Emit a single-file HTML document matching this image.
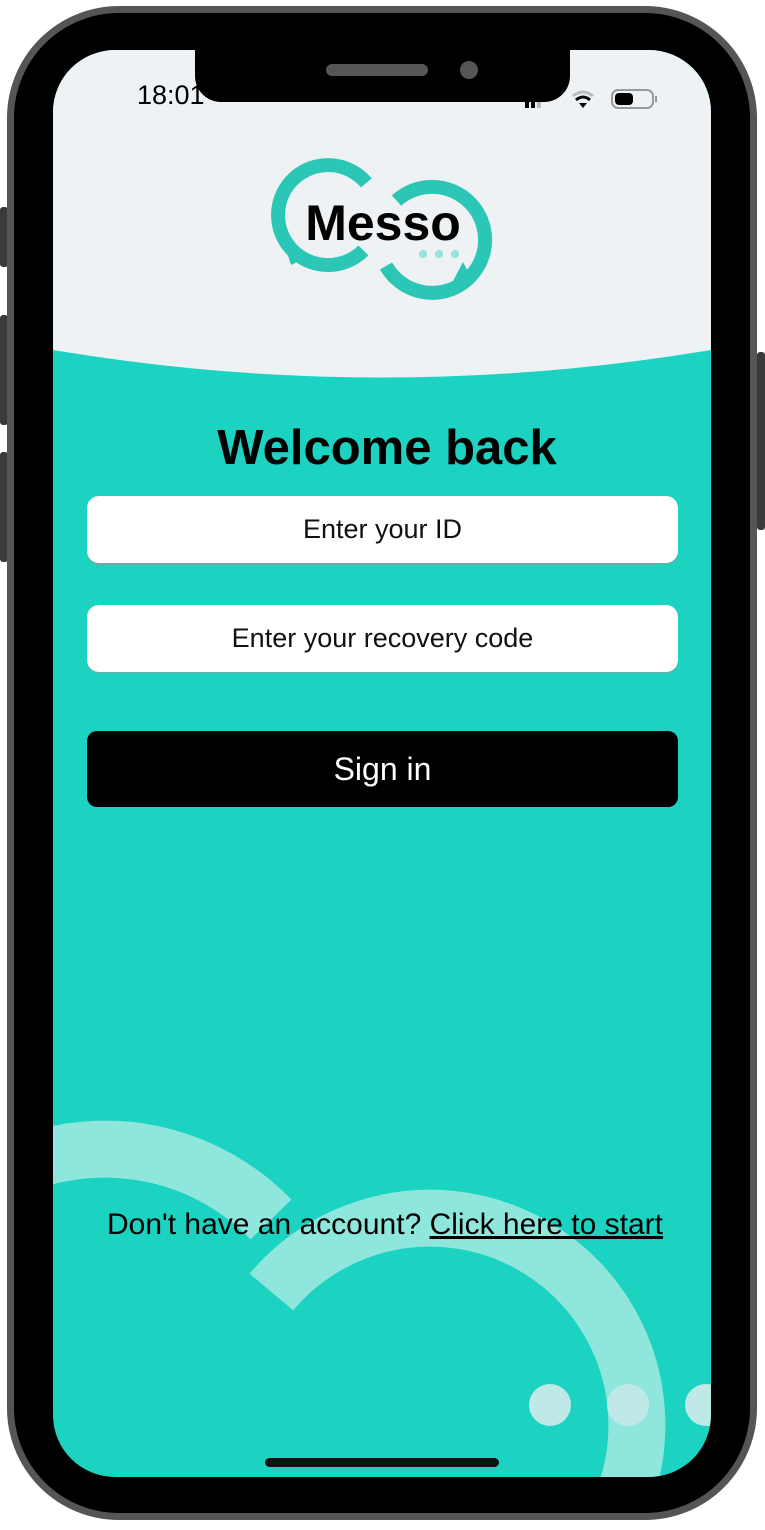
<!DOCTYPE html>
<html><head><meta charset="utf-8"><style>
html,body{margin:0;padding:0;background:#fff;}
body{width:765px;height:1530px;position:relative;overflow:hidden;font-family:"Liberation Sans",sans-serif;}
.abs{position:absolute;}
.btn{background:#3a3a3a;border-radius:3px;}
.frame{left:7px;top:6px;width:736px;height:1500px;border:7px solid #555;border-radius:112px;background:#000;}
.screen{left:53px;top:50px;width:658px;height:1427px;border-radius:62px;overflow:hidden;background:#1cd2c1;}
.inp{left:34px;width:591px;height:67px;background:#fff;border-radius:12px;box-shadow:0 2px 0 #4fb8b0;text-align:center;font-size:27px;line-height:67px;color:#111;}
</style></head><body>
<div class="abs btn" style="left:0;top:207px;width:8px;height:60px"></div>
<div class="abs btn" style="left:0;top:315px;width:8px;height:110px"></div>
<div class="abs btn" style="left:0;top:452px;width:8px;height:110px"></div>
<div class="abs btn" style="left:757px;top:352px;width:8px;height:178px"></div>
<div class="abs frame"></div>
<div class="abs screen">
  <svg class="abs" style="left:0;top:0" width="658" height="1427">
    <path d="M0 0 H658 V300 Q329 355 0 300 Z" fill="#eef2f5"/>
    <g fill="none" stroke="#8ee6dc" stroke-width="57">
      <path d="M-179 1330 A231 231 0 0 1 218 1169.5"/>
      <path d="M218.4 1242 A207 207 0 1 1 413 1579"/>
    </g>
    <circle cx="497" cy="1355" r="21" fill="#bfe9e6"/>
    <circle cx="575" cy="1355" r="21" fill="#bfe9e6"/>
    <circle cx="653" cy="1355" r="21" fill="#bfe9e6"/>
  </svg>
  <div class="abs" style="left:84px;top:30px;font-size:27px;color:#000">18:01</div>
  <svg class="abs" style="left:470px;top:38px" width="140" height="24">
    <rect x="2" y="12" width="4" height="8" fill="#000"/><rect x="8" y="9" width="4" height="11" fill="#000"/><rect x="14" y="6" width="4" height="14" fill="#bbb"/>
    <path d="M50 8 Q60 0 70 8" stroke="#bbb" stroke-width="3" fill="none"/>
    <path d="M53 12 Q60 6 67 12" stroke="#000" stroke-width="3" fill="none"/>
    <path d="M56 15 L60 20 L64 15 Z" fill="#000"/>
    <rect x="89" y="2" width="41" height="18" rx="6" fill="none" stroke="#999" stroke-width="2"/>
    <rect x="92" y="5" width="18" height="12" rx="4" fill="#000"/>
    <rect x="132" y="8" width="2" height="6" fill="#999"/>
  </svg>
  <div class="abs" style="left:0;width:668px;top:370px;text-align:center;font-size:49px;font-weight:bold;color:#000">Welcome back</div>
  <div class="abs inp" style="top:446px">Enter your ID</div>
  <div class="abs inp" style="top:555px">Enter your recovery code</div>
  <div class="abs" style="left:34px;top:681px;width:591px;height:76px;background:#000;border-radius:10px;color:#fff;text-align:center;font-size:32px;line-height:76px">Sign in</div>
  <div class="abs" style="left:0;width:664px;top:1158px;text-align:center;font-size:30px;color:#000">Don't have an account? <span style="text-decoration:underline">Click here to start</span></div>
  <div class="abs" style="left:212px;top:1408px;width:234px;height:9px;border-radius:5px;background:#111"></div>
</div>
<svg class="abs" style="left:0;top:0" width="765" height="400">
  <g fill="none" stroke="#2bc6b5" stroke-width="14">
    <path d="M366.3 182.9 A50 50 0 1 0 363.4 250.4"/>
    <path d="M396.5 200.6 A53 53 0 1 1 386 266"/>
  </g>
  <path d="M283 240 L291 265 L310 256 Z" fill="#2bc6b5"/>
  <path d="M463 262 L474 283 L452 283 Z" fill="#2bc6b5"/>
  <text x="383" y="240" text-anchor="middle" font-family="Liberation Sans" font-weight="bold" font-size="50" fill="#000">Messo</text>
  <circle cx="423" cy="254" r="4" fill="#8fe3d9"/><circle cx="439" cy="254" r="4" fill="#8fe3d9"/><circle cx="455" cy="254" r="4" fill="#8fe3d9"/>
</svg>
<div class="abs" style="left:195px;top:40px;width:375px;height:62px;background:#000;border-radius:0 0 26px 26px"></div>
<div class="abs" style="left:326px;top:64px;width:102px;height:12px;background:#555;border-radius:6px"></div>
<div class="abs" style="left:460px;top:61px;width:18px;height:18px;background:#555;border-radius:50%"></div>
</body></html>
